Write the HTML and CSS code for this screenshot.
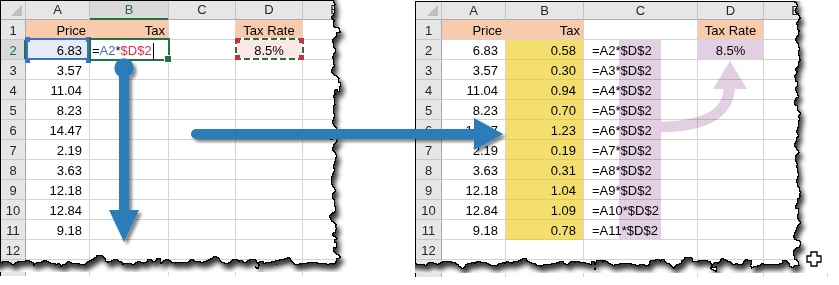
FILE: index.html
```html
<!DOCTYPE html>
<html>
<head>
<meta charset="utf-8">
<title>Relative and absolute references</title>
<link rel="stylesheet" href="styles.css">
</head>
<body>
<div class="page">
  <div class="shot shot-left">
    <div class="sheet sheet-left">
      <div class="c h corner"></div><div class="c h">A</div><div class="c h hsel">B</div><div class="c h">C</div><div class="c h">D</div><div class="c h">E</div>
      <div class="c rh">1</div><div class="c or r join">Price</div><div class="c or r">Tax</div><div class="c"></div><div class="c or ctr">Tax Rate</div><div class="c"></div>
      <div class="c rh rsel">2</div><div class="c num selA">6.83</div><div class="c edit"><span>=</span><span class="ref-a">A2</span><span>*</span><span class="ref-d">$D$2</span><span class="caret"></span></div><div class="c"></div><div class="c ctr selD">8.5%</div><div class="c"></div>
      <div class="c rh">3</div><div class="c num">3.57</div><div class="c"></div><div class="c"></div><div class="c"></div><div class="c"></div>
      <div class="c rh">4</div><div class="c num">11.04</div><div class="c"></div><div class="c"></div><div class="c"></div><div class="c"></div>
      <div class="c rh">5</div><div class="c num">8.23</div><div class="c"></div><div class="c"></div><div class="c"></div><div class="c"></div>
      <div class="c rh">6</div><div class="c num">14.47</div><div class="c"></div><div class="c"></div><div class="c"></div><div class="c"></div>
      <div class="c rh">7</div><div class="c num">2.19</div><div class="c"></div><div class="c"></div><div class="c"></div><div class="c"></div>
      <div class="c rh">8</div><div class="c num">3.63</div><div class="c"></div><div class="c"></div><div class="c"></div><div class="c"></div>
      <div class="c rh">9</div><div class="c num">12.18</div><div class="c"></div><div class="c"></div><div class="c"></div><div class="c"></div>
      <div class="c rh">10</div><div class="c num">12.84</div><div class="c"></div><div class="c"></div><div class="c"></div><div class="c"></div>
      <div class="c rh">11</div><div class="c num">9.18</div><div class="c"></div><div class="c"></div><div class="c"></div><div class="c"></div>
      <div class="c rh">12</div><div class="c"></div><div class="c"></div><div class="c"></div><div class="c"></div><div class="c"></div>
      <div class="c rh"></div><div class="c"></div><div class="c"></div><div class="c"></div><div class="c"></div><div class="c"></div>
    </div>
    <svg class="torn" width="350" height="272" viewBox="0 0 350 272">
      <defs>
        <filter id="tornL" filterUnits="userSpaceOnUse" x="-40" y="-40" width="440" height="360" color-interpolation-filters="sRGB">
          <feTurbulence type="fractalNoise" baseFrequency="0.075" numOctaves="3" seed="7" result="noise"/>
          <feDisplacementMap in="SourceGraphic" in2="noise" scale="18" xChannelSelector="R" yChannelSelector="G" result="paper"/>
          <feMorphology in="paper" operator="erode" radius="1" result="inner"/>
          <feComposite in="paper" in2="inner" operator="out" result="edge"/>
          <feGaussianBlur in="paper" stdDeviation="2.6" result="blur"/>
          <feOffset in="blur" dx="3" dy="5" result="off"/>
          <feFlood flood-color="#000" flood-opacity="0.78"/>
          <feComposite in2="off" operator="in" result="shadow"/>
          <feFlood flood-color="#fff"/>
          <feComposite in2="paper" operator="out" result="outside"/>
          <feComposite in="shadow" in2="paper" operator="out" result="shadowOut"/>
          <feMerge><feMergeNode in="outside"/><feMergeNode in="shadowOut"/><feMergeNode in="edge"/></feMerge>
        </filter>
      </defs>
      <rect x="-40" y="-40" width="375" height="303" fill="#000" filter="url(#tornL)"/>
    </svg>
  </div>

  <div class="shot shot-right">
    <div class="sheet sheet-right">
      <div class="c h corner"></div><div class="c h">A</div><div class="c h">B</div><div class="c h">C</div><div class="c h">D</div><div class="c h">E</div>
      <div class="c rh">1</div><div class="c or r join">Price</div><div class="c or r">Tax</div><div class="c"></div><div class="c or ctr">Tax Rate</div><div class="c"></div>
      <div class="c rh">2</div><div class="c num">6.83</div><div class="c yl num">0.58</div><div class="c fx">=A2*$D$2</div><div class="c pu ctr">8.5%</div><div class="c"></div>
      <div class="c rh">3</div><div class="c num">3.57</div><div class="c yl num">0.30</div><div class="c fx">=A3*$D$2</div><div class="c"></div><div class="c"></div>
      <div class="c rh">4</div><div class="c num">11.04</div><div class="c yl num">0.94</div><div class="c fx">=A4*$D$2</div><div class="c"></div><div class="c"></div>
      <div class="c rh">5</div><div class="c num">8.23</div><div class="c yl num">0.70</div><div class="c fx">=A5*$D$2</div><div class="c"></div><div class="c"></div>
      <div class="c rh">6</div><div class="c num">14.47</div><div class="c yl num">1.23</div><div class="c fx">=A6*$D$2</div><div class="c"></div><div class="c"></div>
      <div class="c rh">7</div><div class="c num">2.19</div><div class="c yl num">0.19</div><div class="c fx">=A7*$D$2</div><div class="c"></div><div class="c"></div>
      <div class="c rh">8</div><div class="c num">3.63</div><div class="c yl num">0.31</div><div class="c fx">=A8*$D$2</div><div class="c"></div><div class="c"></div>
      <div class="c rh">9</div><div class="c num">12.18</div><div class="c yl num">1.04</div><div class="c fx">=A9*$D$2</div><div class="c"></div><div class="c"></div>
      <div class="c rh">10</div><div class="c num">12.84</div><div class="c yl num">1.09</div><div class="c fx">=A10*$D$2</div><div class="c"></div><div class="c"></div>
      <div class="c rh">11</div><div class="c num">9.18</div><div class="c yl num">0.78</div><div class="c fx">=A11*$D$2</div><div class="c"></div><div class="c"></div>
      <div class="c rh">12</div><div class="c"></div><div class="c"></div><div class="c"></div><div class="c"></div><div class="c"></div>
      <div class="c rh"></div><div class="c"></div><div class="c"></div><div class="c"></div><div class="c"></div><div class="c"></div>
    </div>
    <svg class="torn" width="424" height="272" viewBox="0 0 424 272">
      <defs>
        <filter id="tornR" filterUnits="userSpaceOnUse" x="-40" y="-40" width="500" height="360" color-interpolation-filters="sRGB">
          <feTurbulence type="fractalNoise" baseFrequency="0.075" numOctaves="3" seed="21" result="noise"/>
          <feDisplacementMap in="SourceGraphic" in2="noise" scale="18" xChannelSelector="R" yChannelSelector="G" result="paper"/>
          <feMorphology in="paper" operator="erode" radius="1" result="inner"/>
          <feComposite in="paper" in2="inner" operator="out" result="edge"/>
          <feGaussianBlur in="paper" stdDeviation="2.6" result="blur"/>
          <feOffset in="blur" dx="3" dy="5" result="off"/>
          <feFlood flood-color="#000" flood-opacity="0.78"/>
          <feComposite in2="off" operator="in" result="shadow"/>
          <feFlood flood-color="#fff"/>
          <feComposite in2="paper" operator="out" result="outside"/>
          <feComposite in="shadow" in2="paper" operator="out" result="shadowOut"/>
          <feMerge><feMergeNode in="outside"/><feMergeNode in="shadowOut"/><feMergeNode in="edge"/></feMerge>
        </filter>
      </defs>
      <rect x="-40" y="-40" width="423" height="303" fill="#000" filter="url(#tornR)"/>
    </svg>
  </div>

  <svg class="overlay multiply" width="839" height="285" viewBox="0 0 839 285">
    <rect x="619" y="40" width="42" height="199" fill="#e2cfe2"/>
    <path d="M657 127 C 702 127, 729 116, 729.5 86" fill="none" stroke="#e2cfe2" stroke-width="11"/>
    <polygon points="713,89 747,89 730,61" fill="#e2cfe2"/>
  </svg>

  <svg class="overlay" width="839" height="285" viewBox="0 0 839 285">
    <defs>
      <filter id="sh" filterUnits="userSpaceOnUse" x="0" y="0" width="839" height="285">
        <feDropShadow dx="3" dy="3" stdDeviation="1.6" flood-color="#000" flood-opacity="0.45"/>
      </filter>
    </defs>
    <g fill="#2a7db8" filter="url(#sh)">
      <circle cx="124" cy="68" r="9.7"/>
      <rect x="119" y="68" width="10" height="144"/>
      <polygon points="109,210 139,210 124,242"/>
    </g>
    <g filter="url(#sh)">
      <line x1="196" y1="134" x2="476" y2="134" stroke="#2a7db8" stroke-width="10" stroke-linecap="round"/>
      <polygon points="474,118 474,150 503,134" fill="#2a7db8"/>
    </g>
    <polygon class="cursor" points="811,252 817,252 817,256 821,256 821,262 817,262 817,266 811,266 811,262 807,262 807,256 811,256" fill="#fff" stroke="#000" stroke-width="1.3"/>
  </svg>
</div>
</body>
</html>
```

FILE: styles.css
```css
* { box-sizing: border-box; margin: 0; padding: 0; }
html, body { width: 839px; height: 285px; overflow: hidden; background: #fff; }
body { font-family: "Liberation Sans", Arial, sans-serif; font-size: 13px; color: #000; }

.page { position: relative; display: flex; align-items: flex-start; gap: 65px; width: 839px; height: 285px; }

.shot { position: relative; flex: none; height: 276px; overflow: hidden; }
.shot-left { width: 350px; }
.shot-right { width: 424px; margin-top: 1px; }

.sheet { display: grid; width: max-content; border-top: 1px solid #000; border-left: 1px solid #000; }
.sheet-left { grid-template-columns: 25px 64px 79px 67px 67px 64px; grid-template-rows: 19px repeat(13, 20px); }
.sheet-right { grid-template-columns: 26px 64px 78px 114px 66px 64px; grid-template-rows: 18px repeat(13, 20px); }

.c { position: relative; border-right: 1px solid #d4d4d4; border-bottom: 1px solid #d4d4d4; padding-top: 2px; line-height: 17px; white-space: nowrap; }
.h { background: #e6e6e6; border-right-color: #c3c3c3; border-bottom-color: #ababab; color: #262626; text-align: center; padding-top: 0; line-height: 18px; }
.sheet-right .h { line-height: 17px; }
.rh { background: #e6e6e6; border-right-color: #ababab; border-bottom-color: #c8c8c8; color: #262626; text-align: center; }

.corner::after { content: ""; position: absolute; right: 3px; bottom: 3px; border-left: 11px solid transparent; border-bottom: 11px solid #bdbdbd; }

.hsel { background: #d9d9d9; color: #217346; }
.hsel::after { content: ""; position: absolute; left: 0; right: 0; bottom: -1px; height: 2px; background: #217346; }
.rsel { background: #d9d9d9; color: #217346; }
.rsel::after { content: ""; position: absolute; top: 0; bottom: 0; right: -1px; width: 2px; background: #217346; }

.num { text-align: right; padding-right: 7px; }
.r { text-align: right; padding-right: 3px; }
.ctr { text-align: center; }
.or { background: #f8cbad; }
.join { border-right-color: transparent; }
.yl { background: #f4de6e; border-bottom-color: #e3cd62; }
.pu { background: #e2cfe2; }
.fx { padding-left: 8px; }

.edit { padding-left: 2px; z-index: 2; }
.ref-a { color: #3d6fcb; }
.ref-d { color: #d6334a; }
.caret { display: inline-block; width: 1px; height: 16px; margin-left: 1px; background: #000; vertical-align: -4px; }

/* selection frames in the left sheet */
.selA { background: #e5ecf7; z-index: 1; }
.selA::after { content: ""; position: absolute; left: 0; right: 0; top: -2px; bottom: -1px; border: 2px solid #3f6fca; }
.selA::before {
  content: ""; position: absolute; left: -1px; right: -2px; top: -3px; bottom: -4px; z-index: 3;
  background:
    linear-gradient(#3f6fca, #3f6fca) left top / 5px 5px no-repeat,
    linear-gradient(#3f6fca, #3f6fca) right top / 5px 5px no-repeat,
    linear-gradient(#3f6fca, #3f6fca) left bottom / 5px 5px no-repeat,
    linear-gradient(#3f6fca, #3f6fca) right bottom / 5px 5px no-repeat;
}
.edit::after { content: ""; position: absolute; left: -1px; right: -2px; top: -2px; bottom: -2px; border: 2px solid #217346; }
.edit::before { content: ""; position: absolute; right: -4px; bottom: -4px; width: 6px; height: 6px; background: #217346; border: 1px solid #fff; z-index: 3; }

.selD { background: #f9e8e6; z-index: 1; }
.selD::after {
  content: ""; position: absolute; left: -1px; right: -2px; top: -2px; bottom: -1px;
  background:
    repeating-linear-gradient(90deg, #217346 0 6px, #fff 6px 9px) left top / 100% 2px no-repeat,
    repeating-linear-gradient(90deg, #217346 0 6px, #fff 6px 9px) left bottom / 100% 2px no-repeat,
    repeating-linear-gradient(180deg, #217346 0 6px, #fff 6px 9px) left top / 2px 100% no-repeat,
    repeating-linear-gradient(180deg, #217346 0 6px, #fff 6px 9px) right top / 2px 100% no-repeat;
}
.selD::before {
  content: ""; position: absolute; left: -1px; right: -2px; top: -2px; bottom: -1px; z-index: 3;
  background:
    linear-gradient(#c8323f, #c8323f) left top / 5px 5px no-repeat,
    linear-gradient(#c8323f, #c8323f) right top / 5px 5px no-repeat,
    linear-gradient(#c8323f, #c8323f) left bottom / 5px 5px no-repeat,
    linear-gradient(#c8323f, #c8323f) right bottom / 5px 5px no-repeat;
}

.torn { position: absolute; left: 0; top: 0; z-index: 5; }
.overlay { position: absolute; left: 0; top: 0; pointer-events: none; z-index: 6; }
.multiply { mix-blend-mode: multiply; }
```
